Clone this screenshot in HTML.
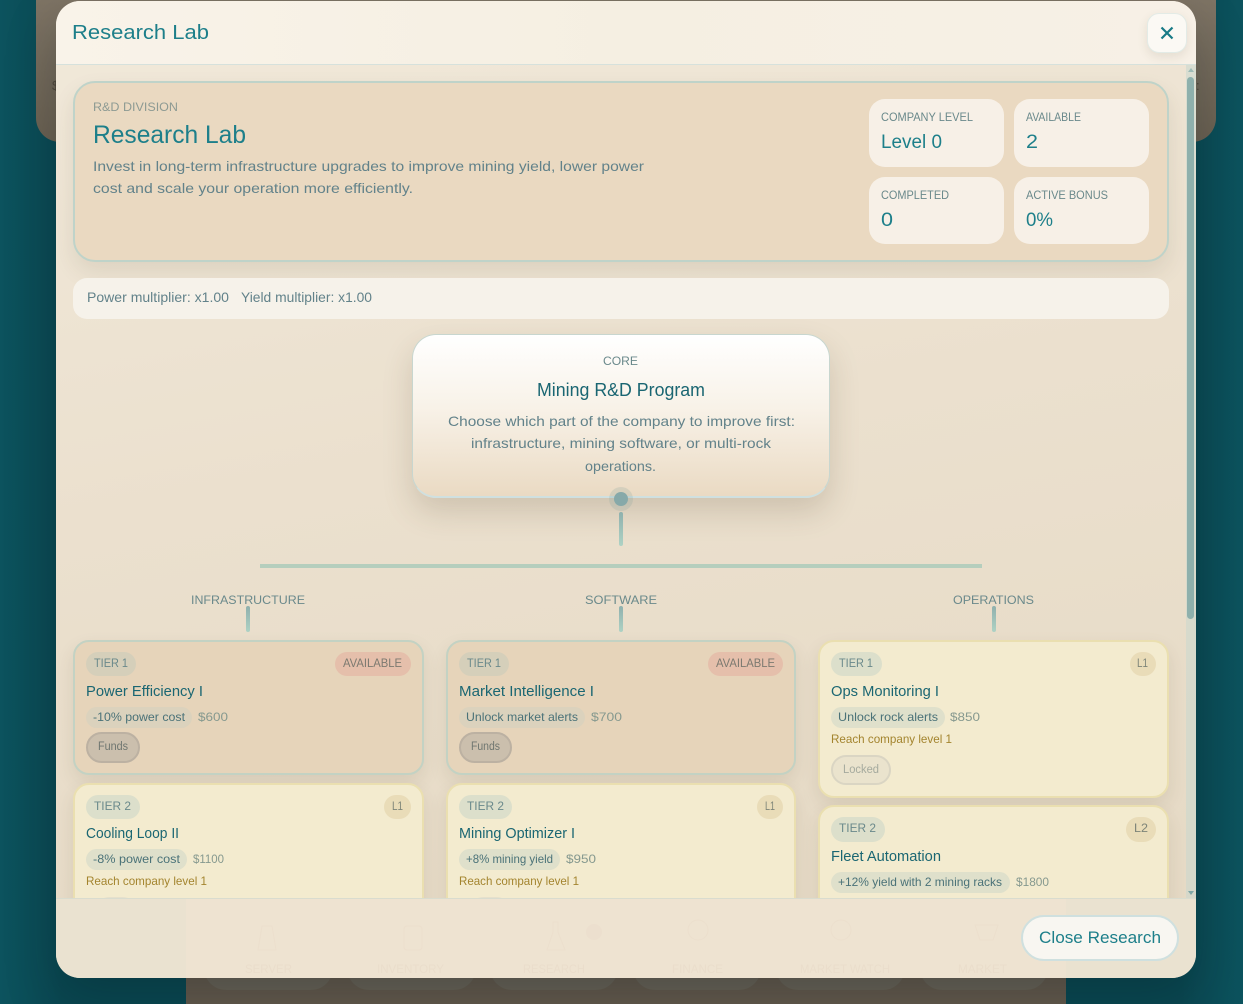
<!DOCTYPE html>
<html lang="en">
<head>
<meta charset="utf-8">
<title>Research Lab</title>
<style>
html,body{margin:0;padding:0;width:1243px;height:1004px;overflow:hidden;background:#0b4e59}
body{position:relative;font-family:"Liberation Sans",sans-serif}
.a{position:absolute;box-sizing:border-box}
svg.t{position:absolute;left:0;top:0;width:1243px;height:1004px;overflow:visible}
svg text{font-family:"Liberation Sans",sans-serif}
.ti{fill:#1d7f8a}
.mu{fill:#62828a}
.la{fill:#6a898b}
.na{fill:#1a6672}
.pi{fill:#4a7278}
.pr{fill:#86998f}
.re{fill:#a3842e}
.card{border-radius:16px;border:2px solid #c3d2c3;background:#e6d4ba;box-shadow:0 8px 18px rgba(70,55,30,.1)}
.y{border-color:#eadfb0;background:#f3ebcf}
.pill{border-radius:13px;background:#d5cfba}
.y .pill,.pill.g{background:#dcdfcb}
.ef{border-radius:11px;background:#dbd2bd}
.ef.g{background:#dfe0cb}
.lv{border-radius:13px;background:#e9dcb8}
.st{border-radius:16px;background:#f7f0e7}
.cn{background:linear-gradient(#8fb0ad,#aed2c4);border-radius:2px;width:4px}
</style>
</head>
<body>
<!-- page behind the modal -->
<div class="a" style="left:0;top:0;width:1243px;height:1004px;background:linear-gradient(90deg,#0c535e 0,#0a4852 5%,#0a4852 95%,#0c535e 100%)"></div>
<div class="a" style="left:36px;top:0;width:1180px;height:142px;border-radius:0 0 24px 24px;background:linear-gradient(#7e7465,#6b6152)"></div>
<div class="a" style="left:186px;top:900px;width:880px;height:104px;background:#655a4d"></div>
<div class="a" style="left:204px;top:960px;width:129px;height:30px;border-radius:0 0 22px 22px;background:#6a6357"></div>
<div class="a" style="left:347px;top:960px;width:129px;height:30px;border-radius:0 0 22px 22px;background:#6a6357"></div>
<div class="a" style="left:490px;top:960px;width:128px;height:30px;border-radius:0 0 22px 22px;background:#6a6357"></div>
<div class="a" style="left:633px;top:960px;width:128px;height:30px;border-radius:0 0 22px 22px;background:#6a6357"></div>
<div class="a" style="left:776px;top:960px;width:129px;height:30px;border-radius:0 0 22px 22px;background:#6a6357"></div>
<div class="a" style="left:920px;top:960px;width:128px;height:30px;border-radius:0 0 22px 22px;background:#6a6357"></div>
<svg class="t" viewBox="0 0 1243 1004"><text x="52" y="90" font-size="13" fill="#4f483c">$</text><text x="1196" y="90" font-size="13" fill="#4f483c">:</text></svg>

<!-- modal -->
<div class="a" style="left:56px;top:1px;width:1140px;height:977px;border-radius:24px;background:linear-gradient(170deg,#f1e9da 0,#ebe0ce 45%,#e5d9c4 100%);box-shadow:0 20px 50px rgba(0,20,25,.25)"></div>
<div class="a" style="left:56px;top:1px;width:1140px;height:64px;border-radius:24px 24px 0 0;background:linear-gradient(90deg,#f9f3e9,#f5efe2 50%,#f7f0e6);border-bottom:1px solid #d6e1dc"></div>

<!-- close icon button -->
<div class="a" style="left:1147px;top:13px;width:40px;height:40px;border-radius:12px;background:#fbf9f4;border:1px solid #e3ebe6;box-shadow:0 4px 10px rgba(70,55,30,.1)"></div>
<svg class="a" style="left:1148px;top:14px" width="38" height="38" viewBox="0 0 38 38"><path d="M13.5 13.5L24.5 24.5M24.5 13.5L13.5 24.5" stroke="#177a86" stroke-width="2.2" fill="none"/></svg>

<!-- scroll body -->
<div class="a" style="left:0;top:0;width:1243px;height:1004px;clip-path:inset(65px 47px 106px 56px)">
  <!-- hero -->
  <div class="a" style="left:73px;top:81px;width:1096px;height:181px;border-radius:22px;border:2px solid #bfd3c9;background:#ead9c1;box-shadow:0 10px 22px rgba(70,55,30,.1)"></div>
  <div class="a st" style="left:869px;top:99px;width:135px;height:68px"></div>
  <div class="a st" style="left:1014px;top:99px;width:135px;height:68px"></div>
  <div class="a st" style="left:869px;top:177px;width:135px;height:67px"></div>
  <div class="a st" style="left:1014px;top:177px;width:135px;height:67px"></div>

  <!-- strip -->
  <div class="a" style="left:73px;top:278px;width:1096px;height:41px;border-radius:14px;background:#f6f2ea"></div>

  <!-- core -->
  <div class="a" style="left:412px;top:334px;width:418px;height:164px;border-radius:24px;border:1.5px solid #c8d6cf;border-bottom:2px solid #cfe0e0;background:linear-gradient(#ffffff,#f8f2e8 45%,#eadac3);box-shadow:0 14px 30px rgba(70,55,30,.17)"></div>
  <div class="a" style="left:609px;top:487px;width:24px;height:24px;border-radius:50%;background:rgba(130,165,160,.22)"></div>
  <div class="a" style="left:614px;top:492px;width:14px;height:14px;border-radius:50%;background:#86a9a9"></div>
  <div class="a cn" style="left:619px;top:512px;height:34px"></div>
  <div class="a" style="left:260px;top:564px;width:722px;height:4px;background:#b5cebd"></div>
  <div class="a cn" style="left:246px;top:606px;height:26px"></div>
  <div class="a cn" style="left:619px;top:606px;height:26px"></div>
  <div class="a cn" style="left:992px;top:606px;height:26px"></div>

  <!-- column 1 -->
  <div class="a card" style="left:73px;top:640px;width:351px;height:135px"></div>
  <div class="a pill" style="left:86px;top:652px;width:50px;height:24px"></div>
  <div class="a pill" style="left:335px;top:652px;width:76px;height:24px;background:#e5bfab"></div>
  <div class="a ef" style="left:86px;top:707px;width:106px;height:21px"></div>
  <div class="a" style="left:86px;top:732px;width:54px;height:31px;border-radius:16px;background:#cbbfad;border:2px solid #bcb1a2"></div>

  <div class="a card y" style="left:73px;top:783px;width:351px;height:160px"></div>
  <div class="a pill g" style="left:86px;top:795px;width:54px;height:24px"></div>
  <div class="a lv" style="left:384px;top:795px;width:27px;height:24px"></div>
  <div class="a ef g" style="left:86px;top:849px;width:101px;height:21px"></div>
  <div class="a" style="left:94px;top:897px;width:44px;height:31px;border-radius:16px;background:#e6e0cc"></div>

  <!-- column 2 -->
  <div class="a card" style="left:446px;top:640px;width:350px;height:135px"></div>
  <div class="a pill" style="left:459px;top:652px;width:50px;height:24px"></div>
  <div class="a pill" style="left:708px;top:652px;width:75px;height:24px;background:#e5bfab"></div>
  <div class="a ef" style="left:459px;top:707px;width:126px;height:21px"></div>
  <div class="a" style="left:459px;top:732px;width:53px;height:31px;border-radius:16px;background:#cbbfad;border:2px solid #bcb1a2"></div>

  <div class="a card y" style="left:446px;top:783px;width:350px;height:160px"></div>
  <div class="a pill g" style="left:459px;top:795px;width:53px;height:24px"></div>
  <div class="a lv" style="left:757px;top:795px;width:26px;height:24px"></div>
  <div class="a ef g" style="left:459px;top:849px;width:101px;height:21px"></div>
  <div class="a" style="left:468px;top:897px;width:44px;height:31px;border-radius:16px;background:#e6e0cc"></div>

  <!-- column 3 -->
  <div class="a card y" style="left:818px;top:640px;width:351px;height:158px"></div>
  <div class="a pill g" style="left:831px;top:652px;width:51px;height:24px"></div>
  <div class="a lv" style="left:1130px;top:652px;width:26px;height:24px"></div>
  <div class="a ef g" style="left:831px;top:707px;width:114px;height:21px"></div>
  <div class="a" style="left:831px;top:755px;width:60px;height:30px;border-radius:15px;background:#eae3cd;border:2px solid #dad5c3"></div>

  <div class="a card y" style="left:818px;top:805px;width:351px;height:160px"></div>
  <div class="a pill g" style="left:831px;top:817px;width:54px;height:25px"></div>
  <div class="a lv" style="left:1126px;top:817px;width:30px;height:25px"></div>
  <div class="a ef g" style="left:831px;top:872px;width:179px;height:21px"></div>

  <svg class="t" viewBox="0 0 1243 1004">
    <text x="93" y="111" font-size="12" textLength="85" lengthAdjust="spacingAndGlyphs" fill="#8d9a93">R&amp;D DIVISION</text>
    <text x="93" y="143" font-size="25" textLength="153" lengthAdjust="spacingAndGlyphs" class="ti">Research Lab</text>
    <text x="93" y="171" font-size="14" textLength="551" lengthAdjust="spacingAndGlyphs" class="mu">Invest in long-term infrastructure upgrades to improve mining yield, lower power</text>
    <text x="93" y="193" font-size="14" textLength="320" lengthAdjust="spacingAndGlyphs" class="mu">cost and scale your operation more efficiently.</text>

    <text x="881" y="121" font-size="12" textLength="92" lengthAdjust="spacingAndGlyphs" class="la">COMPANY LEVEL</text>
    <text x="1026" y="121" font-size="12" textLength="55" lengthAdjust="spacingAndGlyphs" class="la">AVAILABLE</text>
    <text x="881" y="199" font-size="12" textLength="68" lengthAdjust="spacingAndGlyphs" class="la">COMPLETED</text>
    <text x="1026" y="199" font-size="12" textLength="82" lengthAdjust="spacingAndGlyphs" class="la">ACTIVE BONUS</text>
    <text x="881" y="148" font-size="19" textLength="61" lengthAdjust="spacingAndGlyphs" class="ti">Level 0</text>
    <text x="1026" y="148" font-size="19" textLength="12" lengthAdjust="spacingAndGlyphs" class="ti">2</text>
    <text x="881" y="226" font-size="19" textLength="12" lengthAdjust="spacingAndGlyphs" class="ti">0</text>
    <text x="1026" y="226" font-size="19" textLength="27" lengthAdjust="spacingAndGlyphs" class="ti">0%</text>

    <text x="87" y="302" font-size="14" textLength="142" lengthAdjust="spacingAndGlyphs" class="mu">Power multiplier: x1.00</text>
    <text x="241" y="302" font-size="14" textLength="131" lengthAdjust="spacingAndGlyphs" class="mu">Yield multiplier: x1.00</text>

    <text x="603" y="365" font-size="12" textLength="35" lengthAdjust="spacingAndGlyphs" class="la">CORE</text>
    <text x="537" y="396" font-size="18" textLength="168" lengthAdjust="spacingAndGlyphs" class="na">Mining R&amp;D Program</text>
    <text x="448" y="426" font-size="14" textLength="347" lengthAdjust="spacingAndGlyphs" class="mu">Choose which part of the company to improve first:</text>
    <text x="471" y="448" font-size="14" textLength="300" lengthAdjust="spacingAndGlyphs" class="mu">infrastructure, mining software, or multi-rock</text>
    <text x="585" y="471" font-size="14" textLength="71" lengthAdjust="spacingAndGlyphs" class="mu">operations.</text>

    <text x="191" y="604" font-size="12" textLength="114" lengthAdjust="spacingAndGlyphs" class="la">INFRASTRUCTURE</text>
    <text x="585" y="604" font-size="12" textLength="72" lengthAdjust="spacingAndGlyphs" class="la">SOFTWARE</text>
    <text x="953" y="604" font-size="12" textLength="81" lengthAdjust="spacingAndGlyphs" class="la">OPERATIONS</text>

    <!-- c1 card1 -->
    <text x="94" y="667" font-size="12" textLength="34" lengthAdjust="spacingAndGlyphs" class="la">TIER 1</text>
    <text x="343" y="667" font-size="12" textLength="59" lengthAdjust="spacingAndGlyphs" fill="#7c7a70">AVAILABLE</text>
    <text x="86" y="696" font-size="15" textLength="117" lengthAdjust="spacingAndGlyphs" class="na">Power Efficiency I</text>
    <text x="93" y="721" font-size="12" textLength="92" lengthAdjust="spacingAndGlyphs" class="pi">-10% power cost</text>
    <text x="198" y="721" font-size="12" textLength="30" lengthAdjust="spacingAndGlyphs" class="pr">$600</text>
    <text x="98" y="750" font-size="11.5" textLength="30" lengthAdjust="spacingAndGlyphs" fill="#6f7670">Funds</text>
    <!-- c1 card2 -->
    <text x="94" y="810" font-size="12" textLength="37" lengthAdjust="spacingAndGlyphs" class="la">TIER 2</text>
    <text x="392" y="810" font-size="12" textLength="11" lengthAdjust="spacingAndGlyphs" fill="#7d8478">L1</text>
    <text x="86" y="838" font-size="15" textLength="93" lengthAdjust="spacingAndGlyphs" class="na">Cooling Loop II</text>
    <text x="93" y="863" font-size="12" textLength="87" lengthAdjust="spacingAndGlyphs" class="pi">-8% power cost</text>
    <text x="193" y="863" font-size="12" textLength="31" lengthAdjust="spacingAndGlyphs" class="pr">$1100</text>
    <text x="86" y="885" font-size="12" textLength="121" lengthAdjust="spacingAndGlyphs" class="re">Reach company level 1</text>
    <!-- c2 card1 -->
    <text x="467" y="667" font-size="12" textLength="34" lengthAdjust="spacingAndGlyphs" class="la">TIER 1</text>
    <text x="716" y="667" font-size="12" textLength="59" lengthAdjust="spacingAndGlyphs" fill="#7c7a70">AVAILABLE</text>
    <text x="459" y="696" font-size="15" textLength="135" lengthAdjust="spacingAndGlyphs" class="na">Market Intelligence I</text>
    <text x="466" y="721" font-size="12" textLength="112" lengthAdjust="spacingAndGlyphs" class="pi">Unlock market alerts</text>
    <text x="591" y="721" font-size="12" textLength="31" lengthAdjust="spacingAndGlyphs" class="pr">$700</text>
    <text x="471" y="750" font-size="11.5" textLength="29" lengthAdjust="spacingAndGlyphs" fill="#6f7670">Funds</text>
    <!-- c2 card2 -->
    <text x="467" y="810" font-size="12" textLength="37" lengthAdjust="spacingAndGlyphs" class="la">TIER 2</text>
    <text x="765" y="810" font-size="12" textLength="10" lengthAdjust="spacingAndGlyphs" fill="#7d8478">L1</text>
    <text x="459" y="838" font-size="15" textLength="116" lengthAdjust="spacingAndGlyphs" class="na">Mining Optimizer I</text>
    <text x="466" y="863" font-size="12" textLength="87" lengthAdjust="spacingAndGlyphs" class="pi">+8% mining yield</text>
    <text x="566" y="863" font-size="12" textLength="30" lengthAdjust="spacingAndGlyphs" class="pr">$950</text>
    <text x="459" y="885" font-size="12" textLength="120" lengthAdjust="spacingAndGlyphs" class="re">Reach company level 1</text>
    <!-- c3 card1 -->
    <text x="839" y="667" font-size="12" textLength="34" lengthAdjust="spacingAndGlyphs" class="la">TIER 1</text>
    <text x="1137" y="667" font-size="12" textLength="11" lengthAdjust="spacingAndGlyphs" fill="#7d8478">L1</text>
    <text x="831" y="696" font-size="15" textLength="108" lengthAdjust="spacingAndGlyphs" class="na">Ops Monitoring I</text>
    <text x="838" y="721" font-size="12" textLength="100" lengthAdjust="spacingAndGlyphs" class="pi">Unlock rock alerts</text>
    <text x="950" y="721" font-size="12" textLength="30" lengthAdjust="spacingAndGlyphs" class="pr">$850</text>
    <text x="831" y="743" font-size="12" textLength="121" lengthAdjust="spacingAndGlyphs" class="re">Reach company level 1</text>
    <text x="843" y="773" font-size="11.5" textLength="36" lengthAdjust="spacingAndGlyphs" fill="#a5aa9e">Locked</text>
    <!-- c3 card2 -->
    <text x="839" y="832" font-size="12" textLength="37" lengthAdjust="spacingAndGlyphs" class="la">TIER 2</text>
    <text x="1134" y="832" font-size="12" textLength="14" lengthAdjust="spacingAndGlyphs" fill="#7d8478">L2</text>
    <text x="831" y="861" font-size="15" textLength="110" lengthAdjust="spacingAndGlyphs" class="na">Fleet Automation</text>
    <text x="838" y="886" font-size="12" textLength="164" lengthAdjust="spacingAndGlyphs" class="pi">+12% yield with 2 mining racks</text>
    <text x="1016" y="886" font-size="12" textLength="33" lengthAdjust="spacingAndGlyphs" class="pr">$1800</text>
  </svg>
</div>

<!-- scrollbar -->
<div class="a" style="left:1186px;top:65px;width:10px;height:833px;background:rgba(200,215,205,.55)"></div>
<div class="a" style="left:1187px;top:77px;width:7px;height:542px;border-radius:4px;background:#8eb0ac"></div>
<svg class="a" style="left:1186px;top:65px" width="10" height="10"><path d="M2 7L5 3L8 7Z" fill="#9dbbb6"/></svg>
<svg class="a" style="left:1186px;top:888px" width="10" height="10"><path d="M2 3L8 3L5 7Z" fill="#7fa6a6"/></svg>

<!-- footer -->
<div class="a" style="left:56px;top:898px;width:1140px;height:80px;border-radius:0 0 24px 24px;background:#eae2d0;border-top:1px solid #d9dccf"></div>
<div class="a" style="left:186px;top:899px;width:880px;height:79px;background:#eee3d1"></div>
<svg class="t" viewBox="0 0 1243 1004">
  <g fill="none" stroke="#ecdfcd" stroke-width="1">
    <path d="M262 926L272 926L276 950L258 950Z"/>
    <rect x="404" y="926" width="18" height="24" rx="3"/>
    <path d="M553 922L558 922L558 932L565 950L547 950L553 932Z"/>
    <circle cx="698" cy="930" r="10"/>
    <circle cx="841" cy="930" r="10"/>
    <path d="M975 925L998 925L993 940L980 940Z"/>
  </g>
  <circle cx="594" cy="932" r="8" fill="#ecdfce"/>
  <g fill="#eaddcb" font-size="12">
    <text x="245" y="973" textLength="47" lengthAdjust="spacingAndGlyphs">SERVER</text>
    <text x="377" y="973" textLength="67" lengthAdjust="spacingAndGlyphs">INVENTORY</text>
    <text x="523" y="973" textLength="62" lengthAdjust="spacingAndGlyphs">RESEARCH</text>
    <text x="672" y="973" textLength="51" lengthAdjust="spacingAndGlyphs">FINANCE</text>
    <text x="800" y="973" textLength="90" lengthAdjust="spacingAndGlyphs">MARKET WATCH</text>
    <text x="958" y="973" textLength="49" lengthAdjust="spacingAndGlyphs">MARKET</text>
  </g>
</svg>
<div class="a" style="left:1021px;top:915px;width:158px;height:46px;border-radius:23px;background:#f8f6f1;border:2px solid #cfe0df"></div>

<!-- top-level text -->
<svg class="t" viewBox="0 0 1243 1004">
  <text x="72" y="39" font-size="20.5" textLength="137" lengthAdjust="spacingAndGlyphs" class="ti">Research Lab</text>
  <text x="1039" y="943" font-size="17" textLength="122" lengthAdjust="spacingAndGlyphs" class="ti">Close Research</text>
</svg>
</body>
</html>
